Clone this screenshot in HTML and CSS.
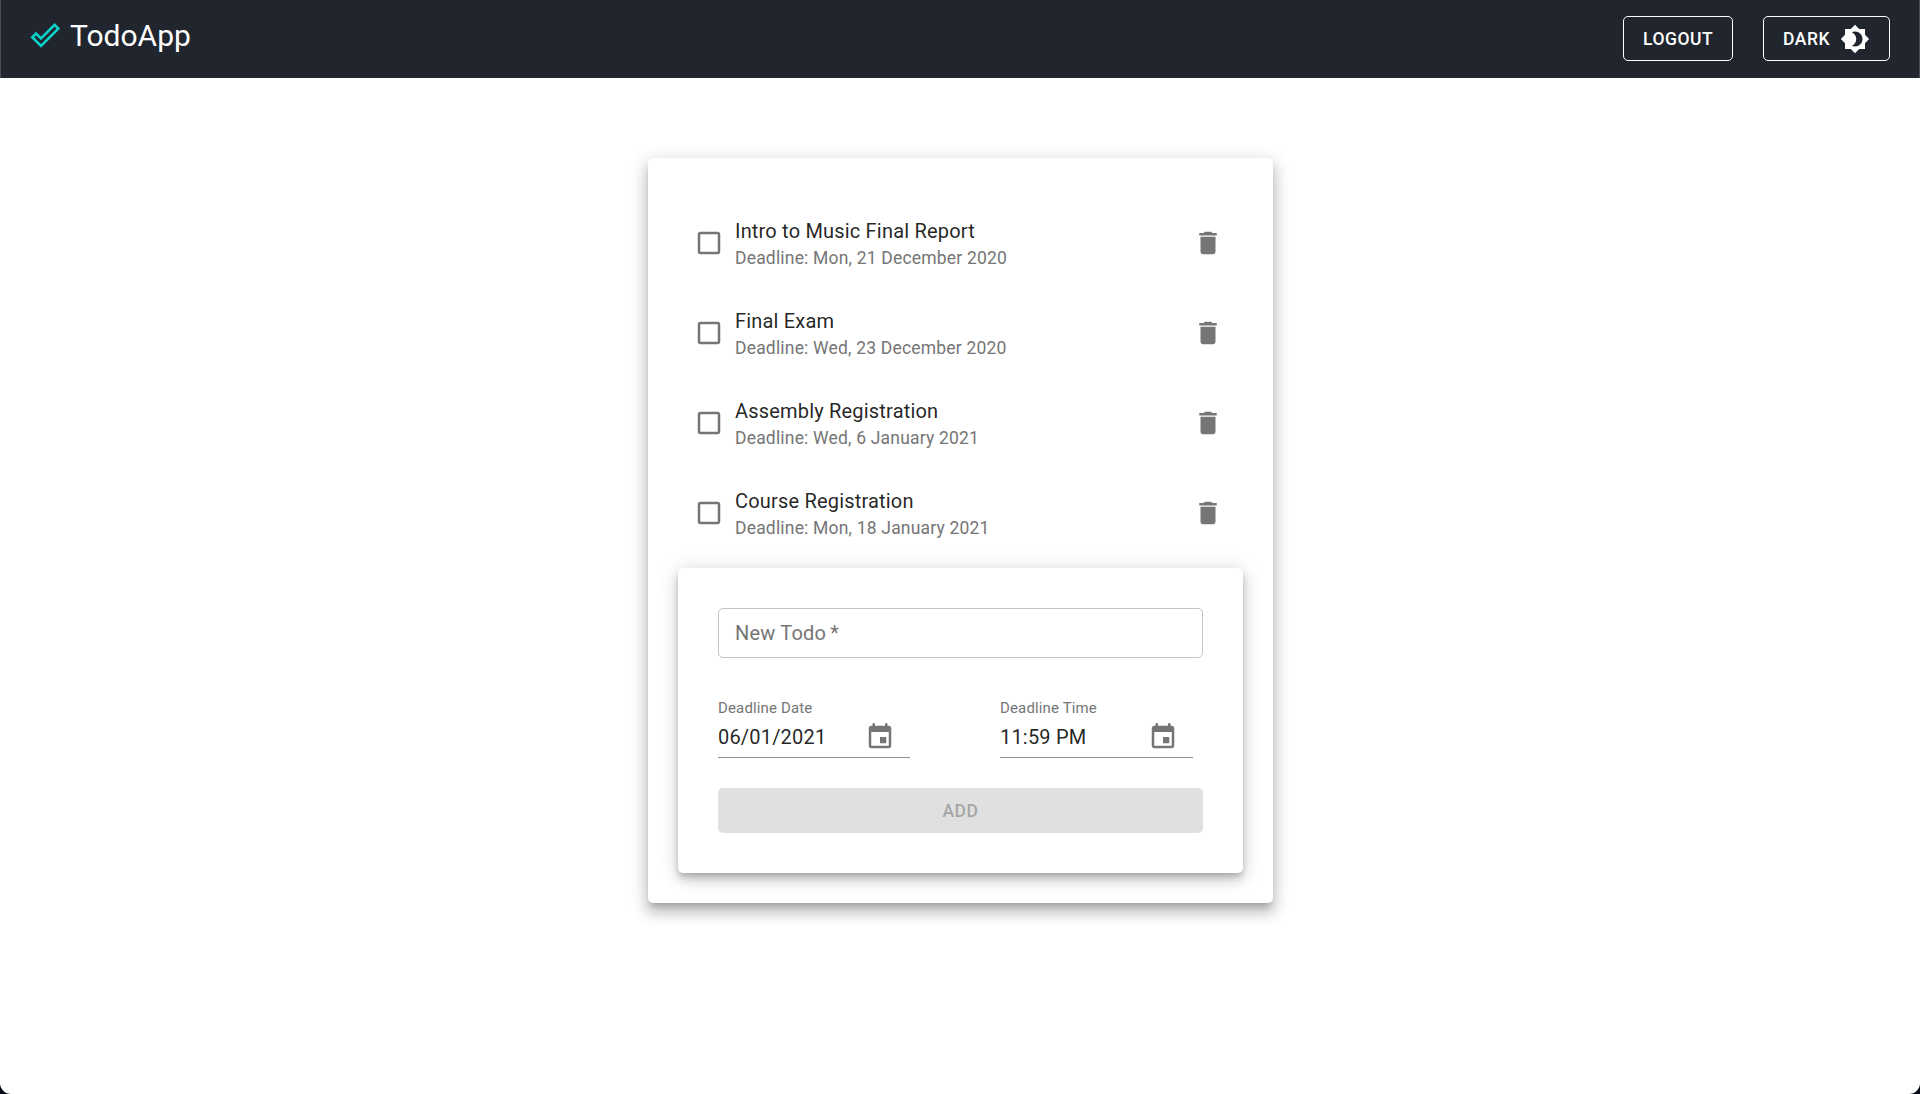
FILE: index.html
```html
<!DOCTYPE html>
<html lang="en">
<head>
<meta charset="utf-8">
<title>TodoApp</title>
<link rel="stylesheet" href="styles.css">
</head>
<body>
<svg width="0" height="0" class="defs">
  <symbol id="box" viewBox="0 0 24 24"><path d="M19 5v14H5V5h14m0-2H5c-1.1 0-2 .9-2 2v14c0 1.1.9 2 2 2h14c1.1 0 2-.9 2-2V5c0-1.1-.9-2-2-2z"/></symbol>
  <symbol id="trash" viewBox="0 0 24 24"><path d="M6 19c0 1.100.9 2 2 2h8c1.100 0 2-.9 2-2V7H6v12zM19 4h-3.500l-1-1h-5l-1 1H5v2h14V4z"/></symbol>
  <symbol id="event" viewBox="0 0 24 24"><path d="M17 12h-5v5h5v-5zM16 1v2H8V1H6v2H5c-1.110 0-1.990.9-1.990 2L3 19c0 1.100.890 2 2 2h14c1.100 0 2-.9 2-2V5c0-1.100-.9-2-2-2h-1V1h-2zm3 18H5V8h14v11z"/></symbol>
</svg>
<div class="app">
  <header class="bar">
    <div class="brand">
      <svg class="logo" viewBox="0 0 30 30"><path d="M2.300 16.200L6 12.500L11 17.500L24.600 3.900L28.300 7.600L11 25Z"/></svg>
      <h1>TodoApp</h1>
    </div>
    <div class="actions">
      <button class="btn">Logout</button>
      <button class="btn">Dark
        <svg class="icon" viewBox="0 0 24 24"><path d="M20 8.690V4h-4.690L12 .690 8.690 4H4v4.690L.690 12 4 15.310V20h4.690L12 23.310 15.310 20H20v-4.690L23.310 12 20 8.690zM12 18c-.890 0-1.740-.2-2.500-.550C11.560 16.500 13 14.420 13 12s-1.440-4.500-3.500-5.450C10.260 6.200 11.110 6 12 6c3.310 0 6 2.690 6 6s-2.690 6-6 6z"/></svg>
      </button>
    </div>
  </header>
  <main class="card">
    <ul class="list">
      <li class="item"><svg class="icon"><use href="#box"/></svg><div class="text"><p class="title">Intro to Music Final Report</p><p class="due">Deadline: Mon, 21 December 2020</p></div><svg class="icon"><use href="#trash"/></svg></li>
      <li class="item"><svg class="icon"><use href="#box"/></svg><div class="text"><p class="title">Final Exam</p><p class="due">Deadline: Wed, 23 December 2020</p></div><svg class="icon"><use href="#trash"/></svg></li>
      <li class="item"><svg class="icon"><use href="#box"/></svg><div class="text"><p class="title">Assembly Registration</p><p class="due">Deadline: Wed, 6 January 2021</p></div><svg class="icon"><use href="#trash"/></svg></li>
      <li class="item"><svg class="icon"><use href="#box"/></svg><div class="text"><p class="title">Course Registration</p><p class="due">Deadline: Mon, 18 January 2021</p></div><svg class="icon"><use href="#trash"/></svg></li>
    </ul>
    <section class="form">
      <div class="outlined">New Todo&thinsp;*</div>
      <div class="pickers">
        <div class="picker"><span class="label">Deadline Date</span><div class="value"><span>06/01/2021</span><svg class="icon"><use href="#event"/></svg></div></div>
        <div class="picker time"><span class="label">Deadline Time</span><div class="value"><span>11:59 PM</span><svg class="icon"><use href="#event"/></svg></div></div>
      </div>
      <button class="add" disabled>Add</button>
    </section>
  </main>
</div>
</body>
</html>
```
FILE: styles.css
```css
* { box-sizing: border-box; }
html { background: #080a18; }
body { margin: 0; font-family: Roboto, "Liberation Sans", sans-serif; color: rgba(0, 0, 0, .87); }
.defs { display: block; }
h1, p, ul { margin: 0; padding: 0; }
.app { height: 1094px; background: #fff; border-radius: 0 0 11px 11px; overflow: hidden; }
.bar { height: 78px; padding: 0 29px; background: #21252e; border: solid #484c55; border-width: 0 1px; color: #fff; display: flex; justify-content: space-between; align-items: center; }
.brand { display: flex; align-items: center; gap: 10px; padding-bottom: 6px; }
.logo { width: 30px; height: 30px; fill: none; stroke: #0bd3c9; stroke-width: 2.6; }
h1 { font-size: 30px; font-weight: 400; line-height: 40px; }
.actions { display: flex; gap: 30px; padding-bottom: 1px; }
.btn { height: 45px; padding: 0 19px; display: flex; align-items: center; gap: 10px; border: 1px solid #fff; border-radius: 5px; background: none; color: #fff; font: 500 17.5px/30px Roboto, sans-serif; letter-spacing: .5px; text-transform: uppercase; }
.icon { width: 30px; height: 30px; flex: none; fill: currentColor; }
.card { width: 625px; margin: 80px 0 0 calc(50% - 312px); padding: 30px; border-radius: 5px; background: #fff; box-shadow: 0 6.25px 6.25px -3.75px rgba(0,0,0,.2), 0 10px 12.5px 1.25px rgba(0,0,0,.14), 0 3.75px 17.5px 2.5px rgba(0,0,0,.12); }
.list { padding: 10px 0; list-style: none; }
.item { height: 90px; padding: 0 20px 0 16px; display: flex; align-items: center; }
.item .icon { color: #757575; }
.text { flex: 1; padding-left: 11px; }
.title { font-size: 20px; line-height: 30px; letter-spacing: .188px; }
.due { font-size: 17.5px; line-height: 25px; letter-spacing: .188px; color: #757575; }
.form { height: 305px; padding: 40px; border-radius: 5px; background: #fff; box-shadow: 0 3.75px 6.25px -1.25px rgba(0,0,0,.2), 0 7.5px 12.5px 0 rgba(0,0,0,.14), 0 1.25px 22.5px 0 rgba(0,0,0,.12); }
.outlined { height: 50px; padding: 0 16px; border: 1px solid #c4c4c4; border-radius: 5px; font-size: 20px; line-height: 48px; letter-spacing: .188px; color: #757575; }
.pickers { display: flex; gap: 90px; margin-top: 40px; }
.picker { width: 192px; height: 60px; border-bottom: 1px solid #8d8d8d; }
.time { width: 193px; }
.label { display: block; font-size: 15px; line-height: 20px; letter-spacing: .14px; color: #757575; }
.value { display: flex; justify-content: space-between; align-items: center; height: 37px; padding-right: 15px; font-size: 20px; letter-spacing: .188px; }
.value .icon { color: #757575; }
.add { display: block; width: 100%; height: 45px; margin-top: 30px; border: 0; border-radius: 5px; background: #e0e0e0; color: #a6a6a6; font: 500 17.5px/30px Roboto, sans-serif; letter-spacing: .5px; text-transform: uppercase; }
```
